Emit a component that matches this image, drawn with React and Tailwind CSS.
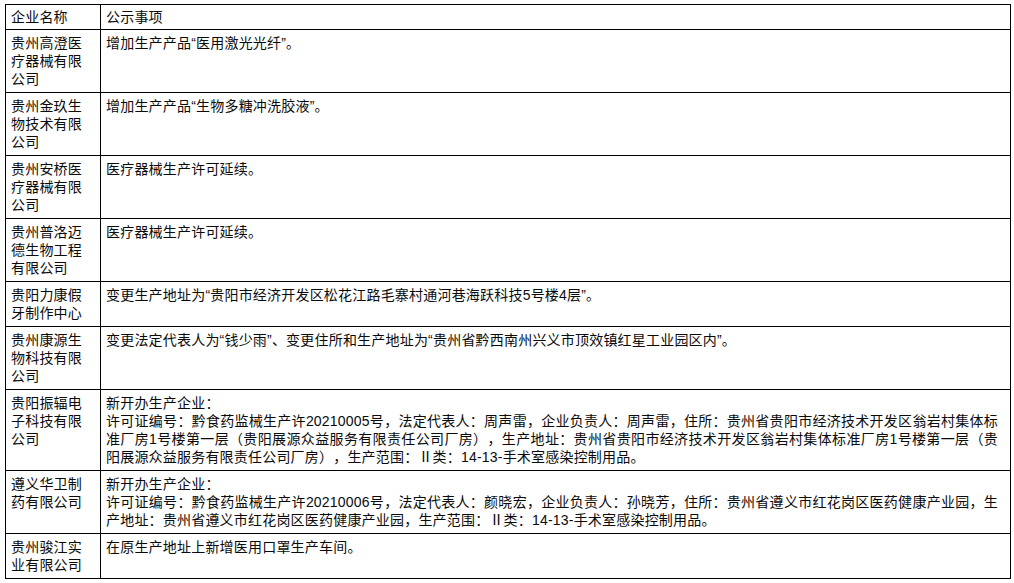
const rows = [
  { name: '贵州高澄医疗器械有限公司', text: ['增加生产产品“医用激光光纤”。'] },
  { name: '贵州金玖生物技术有限公司', text: ['增加生产产品“生物多糖冲洗胶液”。'] },
  { name: '贵州安桥医疗器械有限公司', text: ['医疗器械生产许可延续。'] },
  { name: '贵州普洛迈德生物工程有限公司', text: ['医疗器械生产许可延续。'] },
  {
    name: '贵阳力康假牙制作中心',
    text: ['变更生产地址为“贵阳市经济开发区松花江路毛寨村通河巷海跃科技5号楼4层”。'],
  },
  {
    name: '贵州康源生物科技有限公司',
    text: ['变更法定代表人为“钱少雨”、变更住所和生产地址为“贵州省黔西南州兴义市顶效镇红星工业园区内”。'],
  },
  {
    name: '贵阳振辐电子科技有限公司',
    text: [
      '新开办生产企业：',
      '许可证编号：黔食药监械生产许20210005号，法定代表人：周声雷，企业负责人：周声雷，住所：贵州省贵阳市经济技术开发区翁岩村集体标准厂房1号楼第一层（贵阳展源众益服务有限责任公司厂房），生产地址：贵州省贵阳市经济技术开发区翁岩村集体标准厂房1号楼第一层（贵阳展源众益服务有限责任公司厂房），生产范围：Ⅱ类：14-13-手术室感染控制用品。',
    ],
  },
  {
    name: '遵义华卫制药有限公司',
    text: [
      '新开办生产企业：',
      '许可证编号：黔食药监械生产许20210006号，法定代表人：颜晓宏，企业负责人：孙晓芳，住所：贵州省遵义市红花岗区医药健康产业园，生产地址：贵州省遵义市红花岗区医药健康产业园，生产范围：Ⅱ类：14-13-手术室感染控制用品。',
    ],
  },
  { name: '贵州骏江实业有限公司', text: ['在原生产地址上新增医用口罩生产车间。'] },
]

function App() {
  return (
    <div
      className="min-h-screen bg-white pt-[4px] pl-[5px] text-[14px] leading-[18px] tracking-[0.2px] text-[#0a0a0a] [text-spacing-trim:space-all]"
      style={{ fontFamily: '"Liberation Sans", "Noto Sans CJK SC", sans-serif' }}
    >
      <table className="w-[1006px] table-fixed border-separate border-spacing-0 border-l border-t border-black">
        <colgroup>
          <col className="w-[95px]" />
          <col />
        </colgroup>
        <thead>
          <tr>
            <th className="border-r border-b border-black py-[3px] pl-[5px] pr-[5px] text-left align-top font-normal">
              企业名称
            </th>
            <th className="border-r border-b border-black py-[3px] pl-[5px] pr-[12px] text-left align-top font-normal">
              公示事项
            </th>
          </tr>
        </thead>
        <tbody>
          {rows.map((row) => (
            <tr key={row.name}>
              <td className="border-r border-b border-black py-[4px] pl-[5px] pr-[5px] align-top">
                {row.name}
              </td>
              <td className="border-r border-b border-black py-[4px] pl-[5px] pr-[12px] align-top text-justify">
                {row.text.map((line, i) => (
                  <div key={i}>{line}</div>
                ))}
              </td>
            </tr>
          ))}
        </tbody>
      </table>
    </div>
  )
}

export default App
